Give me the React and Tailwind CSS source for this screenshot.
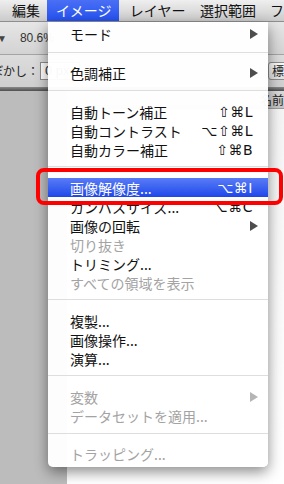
import React from 'react'

const jp = { fontFamily: '"Noto Sans CJK JP", "Liberation Sans", sans-serif' }
const keys = { fontFamily: '"DejaVu Sans", "Noto Sans CJK JP", sans-serif' }

const items = [
  { label: 'モード', arrow: true },
  { sep: 'h-[20px] pt-[9px]' },
  { label: '色調補正', arrow: true },
  { sep: 'h-[20px] pt-[8px]' },
  { label: '自動トーン補正', sc: '⇧⌘L' },
  { label: '自動コントラスト', sc: '⌥⇧⌘L' },
  { label: '自動カラー補正', sc: '⇧⌘B' },
  { sep: 'h-[19px] pt-[7px]' },
  { label: '画像解像度...', sc: '⌥⌘I', active: true },
  { label: 'カンバスサイズ...', sc: '⌥⌘C' },
  { label: '画像の回転', arrow: true },
  { label: '切り抜き', disabled: true },
  { label: 'トリミング...' },
  { label: 'すべての領域を表示', disabled: true },
  { sep: 'h-[19px] pt-[7px]' },
  { label: '複製...' },
  { label: '画像操作...' },
  { label: '演算...' },
  { sep: 'h-[19px] pt-[7px]' },
  { label: '変数', arrow: true, disabled: true },
  { label: 'データセットを適用...', disabled: true },
  { sep: 'h-[19px] pt-[8px]' },
  { label: 'トラッピング...', disabled: true },
]

function Arrow({ color }) {
  return (
    <svg width="8" height="10" viewBox="0 0 8 10" className="shrink-0">
      <path d="M0 0 L8 5 L0 10 Z" fill={color} />
    </svg>
  )
}

function MenuRow({ item }) {
  if (item.sep) {
    return (
      <div className={item.sep}>
        <div className="h-px bg-[#dedede]" />
      </div>
    )
  }
  const text = item.active ? 'text-white' : item.disabled ? 'text-[#a3a3a3]' : 'text-[#111]'
  const bg = item.active ? 'bg-gradient-to-b from-[#5a7bf6] to-[#1f45ea]' : ''
  return (
    <div className={`h-[19px] flex items-center pl-[22px] ${bg} ${text}`}>
      <span className="text-[14px] leading-none flex-1 whitespace-nowrap">{item.label}</span>
      {item.sc && (
        <span style={keys} className="text-[14px] leading-none pr-[15px] tracking-[0.5px] whitespace-nowrap">
          {item.sc}
        </span>
      )}
      {item.arrow && (
        <span className="pr-[10px] flex items-center">
          <Arrow color={item.disabled ? '#b5b5b5' : '#4d4d4d'} />
        </span>
      )}
    </div>
  )
}

export default function App() {
  return (
    <div style={jp} className="relative w-[284px] h-[484px] overflow-hidden bg-[#bdbdbd] flex flex-col">
      {/* menu bar */}
      <div className="h-[22px] shrink-0 flex items-stretch bg-gradient-to-b from-[#efefef] to-[#cbcbcb] border-b border-[#8e8e8e] text-[14px] text-[#111] whitespace-nowrap">
        <div className="w-[48px] pl-[12px] flex items-center">編集</div>
        <div className="w-[74px] pl-[9px] flex items-center text-white bg-gradient-to-b from-[#4a6ff5] to-[#2550ef]">イメージ</div>
        <div className="w-[72px] pl-[11px] flex items-center">レイヤー</div>
        <div className="w-[72px] pl-[11px] flex items-center">選択範囲</div>
        <div className="pl-[11px] flex items-center">フ</div>
      </div>

      {/* options bar row 1 */}
      <div className="h-[33px] shrink-0 flex items-center bg-gradient-to-b from-[#e6e6e6] to-[#d3d3d3] border-b border-[#a4a4a4] text-[12px] text-[#333]" style={{ fontFamily: '"Liberation Sans", sans-serif' }}>
        <span className="-ml-[3px] text-[10px] text-[#444]">▼</span>
        <span className="ml-[13px]">80.6%</span>
      </div>

      {/* options bar row 2 */}
      <div className="h-[32px] shrink-0 flex items-center bg-gradient-to-b from-[#dcdcdc] to-[#cfcfcf] text-[12px] text-[#222] whitespace-nowrap">
        <span className="-ml-[9px]">ぼかし：</span>
        <div className="ml-[1px] h-[18px] w-[40px] bg-white border border-[#8c8c8c] flex items-center pl-[4px] text-[13px]" style={{ fontFamily: '"Liberation Sans", sans-serif' }}>
          0 px
        </div>
        <div className="ml-auto -mr-[14px] h-[18px] w-[30px] bg-gradient-to-b from-[#fafafa] to-[#e2e2e2] border border-[#8c8c8c] rounded-[3px] flex items-center pl-[3px] text-[12px]">
          標準
        </div>
      </div>

      <div className="h-[4px] shrink-0 bg-gradient-to-b from-[#8a8a8a] to-[#4f4f4f]" />

      {/* work area */}
      <div className="flex-1 flex">
        <div className="w-[76px] bg-[#bcbcbc]" />
        <div className="flex-1 flex flex-col bg-white">
          <div className="h-[18px] bg-gradient-to-b from-[#dadada] to-[#c4c4c4] border-b border-[#9c9c9c] pl-[193px] text-[12px] text-[#222] whitespace-nowrap flex items-center">
            名前
          </div>
          <div className="flex-1 bg-gradient-to-b from-[#f4f4f4] to-white" />
        </div>
      </div>

      {/* dropdown menu */}
      <div className="absolute left-[48px] top-[22px] w-[220px] pt-[2px] pb-[4px] bg-white/[0.97] rounded-b-[5px] shadow-[0_5px_14px_rgba(0,0,0,0.45)]">
        {items.map((item, i) => (
          <MenuRow key={i} item={item} />
        ))}
      </div>

      {/* red highlight frame */}
      <div className="absolute left-[36px] top-[168px] w-[247px] h-[37px] border-[4px] border-[#ff0000] rounded-[8px]" />
    </div>
  )
}
